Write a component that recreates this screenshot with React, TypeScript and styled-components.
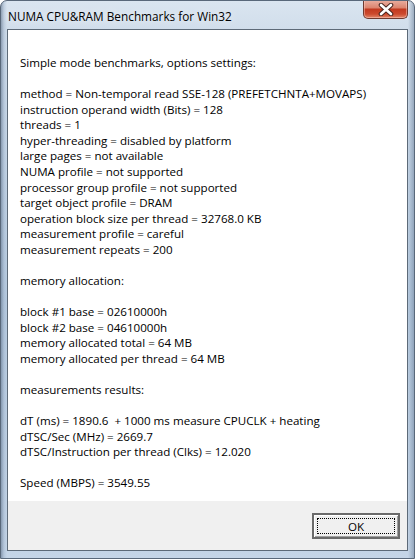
import React from 'react';
import styled, { createGlobalStyle } from 'styled-components';

const GlobalStyle = createGlobalStyle`
	html, body {
		margin: 0;
		padding: 0;
		background: #ffffff;
	}
`;

const lines: string[] = [
	'Simple mode benchmarks, options settings:',
	'',
	'method = Non-temporal read SSE-128 (PREFETCHNTA+MOVAPS)',
	'instruction operand width (Bits) = 128',
	'threads = 1',
	'hyper-threading = disabled by platform',
	'large pages = not available',
	'NUMA profile = not supported',
	'processor group profile = not supported',
	'target object profile = DRAM',
	'operation block size per thread = 32768.0 KB',
	'measurement profile = careful',
	'measurement repeats = 200',
	'',
	'memory allocation:',
	'',
	'block #1 base = 02610000h',
	'block #2 base = 04610000h',
	'memory allocated total = 64 MB',
	'memory allocated per thread = 64 MB',
	'',
	'measurements results:',
	'',
	'dT (ms) = 1890.6  + 1000 ms measure CPUCLK + heating',
	'dTSC/Sec (MHz) = 2669.7',
	'dTSC/Instruction per thread (Clks) = 12.020',
	'',
	'Speed (MBPS) = 3549.55',
];

export default function App() {
	return (
		<>
			<GlobalStyle />
			<StyledWindow>
				<StyledTitleBar>
					<StyledTitle>NUMA CPU&amp;RAM Benchmarks for Win32</StyledTitle>
					<StyledClose>
						<svg width="20" height="13" viewBox="0 0 20 13">
							<path
								d="M5 2 L15 11 M15 2 L5 11"
								stroke="#4a2620"
								strokeWidth="4.6"
								strokeLinecap="round"
								fill="none"
							/>
							<path
								d="M5 2 L15 11 M15 2 L5 11"
								stroke="#ffffff"
								strokeWidth="2.6"
								strokeLinecap="round"
								fill="none"
							/>
						</svg>
					</StyledClose>
				</StyledTitleBar>
				<StyledClient>
					<StyledReport>
						{lines.map((line, index) => (
							<StyledLine key={index}>{line || '\u00a0'}</StyledLine>
						))}
					</StyledReport>
					<StyledFooter>
						<StyledButton>
							<StyledFocus>OK</StyledFocus>
						</StyledButton>
					</StyledFooter>
				</StyledClient>
			</StyledWindow>
		</>
	);
}

const StyledWindow = styled.div`
	width: 415px;
	height: 559px;
	box-sizing: border-box;
	display: flex;
	flex-direction: column;
	border-radius: 7px 7px 0 0;
	border: 1px solid #59687a;
	background:
		linear-gradient(90deg, rgba(95, 115, 140, 0.6) 0px, rgba(150, 170, 195, 0.35) 3px, rgba(200, 214, 230, 0) 6px, rgba(200, 214, 230, 0) 407px, rgba(110, 130, 155, 0.55) 413px),
		linear-gradient(180deg, #dae5f0 0px, #d0ddeb 30px, #b7cbe0 300px, #c5d5e7 559px);
	font-family: 'Open Sans', 'Noto Sans', sans-serif;
	overflow: hidden;
`;

const StyledTitleBar = styled.div`
	height: 28px;
	display: flex;
	justify-content: space-between;
	align-items: flex-start;
	padding: 0 6px 0 7px;
`;

const StyledTitle = styled.span`
	font-family: 'Open Sans', 'Noto Sans', sans-serif;
	font-size: 11.8px;
	line-height: 14px;
	color: #000000;
	margin-top: 8px;
	text-shadow: 0 0 8px rgba(255, 255, 255, 0.9);
`;

const StyledClose = styled.div`
	width: 45px;
	height: 19px;
	margin-top: -1px;
	box-sizing: border-box;
	border: 1px solid #6e3a30;
	border-top: none;
	border-radius: 0 0 5px 5px;
	background: linear-gradient(180deg, #eab0a2 0%, #dc8670 42%, #c23a20 52%, #cc4a2e 78%, #e2876a 100%);
	box-shadow: inset 0 0 0 1px rgba(255, 210, 200, 0.45);
	display: flex;
	align-items: center;
	justify-content: center;
`;

const StyledClient = styled.div`
	flex: 1;
	margin: 0 6px 7px 6px;
	border: 1px solid #5d6a78;
	display: flex;
	flex-direction: column;
	background: #ffffff;
`;

const StyledReport = styled.div`
	flex: 1;
	padding: 25px 12px 0 12px;
`;

const StyledLine = styled.div`
	font-family: 'Open Sans', 'Noto Sans', sans-serif;
	font-size: 11.6px;
	line-height: 15.56px;
	color: #000000;
	white-space: pre;
`;

const StyledFooter = styled.div`
	height: 49px;
	background: #f0f0f0;
	display: flex;
	justify-content: flex-end;
	align-items: flex-start;
	padding: 12px 7px 0 0;
	box-sizing: border-box;
`;

const StyledButton = styled.div`
	width: 88px;
	height: 26px;
	box-sizing: border-box;
	border: 2px solid #6a6a6a;
	background: #f0f0f0;
	box-shadow: inset 1px 1px 0 #ffffff, inset -1px -1px 0 #a0a0a0;
	padding: 3px;
	display: flex;
`;

const StyledFocus = styled.div`
	flex: 1;
	border: 1px dotted #000000;
	display: flex;
	align-items: center;
	justify-content: center;
	font-family: 'Open Sans', 'Noto Sans', sans-serif;
	font-size: 11.6px;
	color: #000000;
`;
